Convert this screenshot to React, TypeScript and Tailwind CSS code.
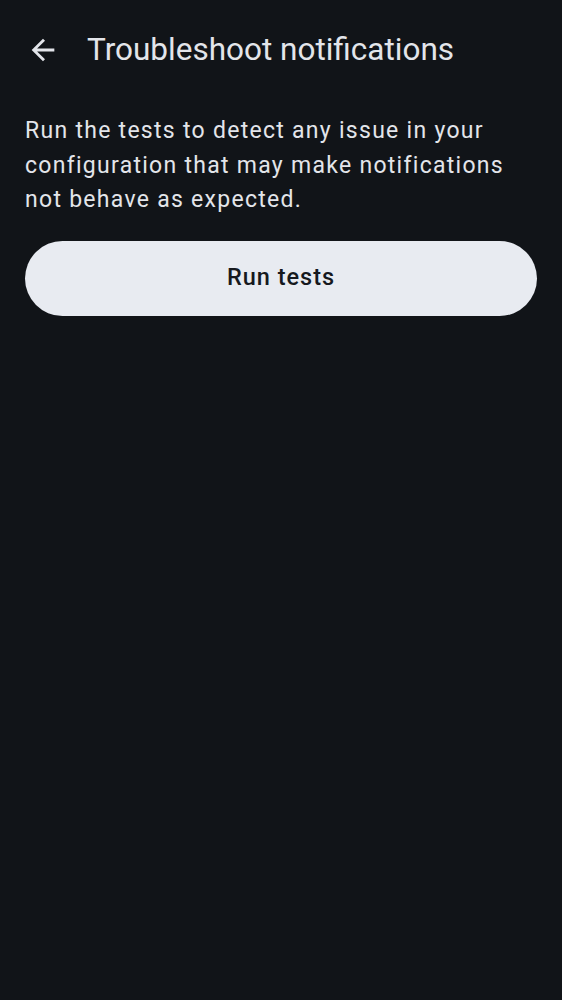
import React from "react";

export default function App() {
  return (
    <div className="min-h-[1000px] w-full bg-[#111418] text-[#e3e5ea]" style={{ fontFamily: "Roboto, 'Noto Sans', sans-serif" }}>
      <div className="flex h-[100px] items-center pl-[26px]">
        <svg width="34" height="34" viewBox="0 0 24 24" fill="#e3e5ea" className="mr-[27px] shrink-0">
          <path d="M20 11H7.83l5.59-5.59L12 4l-8 8 8 8 1.41-1.41L7.83 13H20v-2z" />
        </svg>
        <h1 className="text-[31.5px] font-normal leading-none tracking-[0px]">Troubleshoot notifications</h1>
      </div>
      <div className="px-[25px] pt-[14px]">
        <p className="text-[23px] leading-[34.5px] tracking-[1.28px]">
          Run the tests to detect any issue in your configuration that may make notifications not behave as expected.
        </p>
        <button className="mt-[23px] flex h-[75px] w-full items-center justify-center rounded-full bg-[#e8ebf1] text-[23.5px] font-medium tracking-[1px] text-[#16191e]">
          Run tests
        </button>
      </div>
    </div>
  );
}
